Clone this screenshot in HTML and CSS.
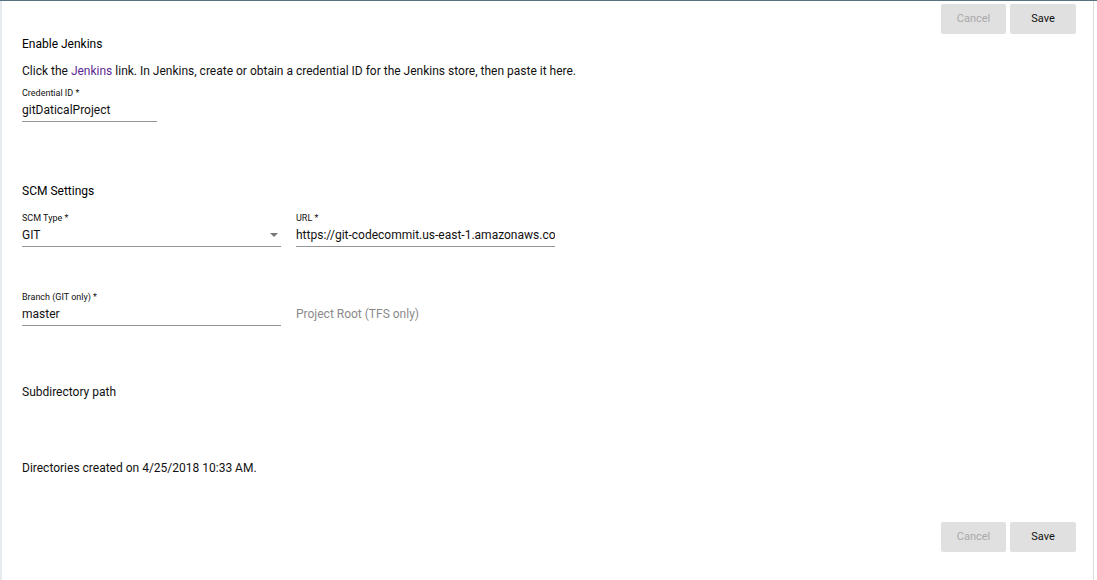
FILE: index.html
```html
<!DOCTYPE html>
<html lang="en">
<head>
  <meta charset="UTF-8">
  <title>Enable Jenkins</title>
  <link rel="stylesheet" href="styles.css">
</head>
<body>
  <div class="page">
    <div class="actions actions-top">
      <button class="btn" disabled>Cancel</button>
      <button class="btn">Save</button>
    </div>

    <h3 class="section-title first">Enable Jenkins</h3>
    <p class="hint">Click the <a href="#">Jenkins</a> link. In Jenkins, create or obtain a credential ID for the Jenkins store, then paste it here.</p>
    <div class="field small">
      <label>Credential ID *</label>
      <div class="value">gitDaticalProject</div>
    </div>

    <h3 class="section-title scm">SCM Settings</h3>
    <div class="row">
      <div class="field wide">
        <label>SCM Type *</label>
        <div class="value select">GIT<span class="caret"></span></div>
      </div>
      <div class="field wide">
        <label>URL *</label>
        <div class="value">https://git-codecommit.us-east-1.amazonaws.co</div>
      </div>
    </div>
    <div class="row second">
      <div class="field wide">
        <label>Branch (GIT only) *</label>
        <div class="value">master</div>
      </div>
      <div class="field wide plain">
        <label>&nbsp;</label>
        <div class="value placeholder">Project Root (TFS only)</div>
      </div>
    </div>

    <p class="text subdir">Subdirectory path</p>
    <p class="text created">Directories created on 4/25/2018 10:33 AM.</p>

    <div class="actions actions-bottom">
      <button class="btn" disabled>Cancel</button>
      <button class="btn">Save</button>
    </div>
  </div>
</body>
</html>
```

FILE: styles.css
```css
html, body {
  height: 100%;
}
body {
  margin: 0;
  font-family: Roboto, "Liberation Sans", Arial, sans-serif;
  color: #111;
  background-color: #fff;
  border-top: 1px solid #55737e;
  box-sizing: border-box;
}
.page {
  height: 579px;
  box-sizing: border-box;
  margin-right: 3px;
  padding: 0 17px 0 22px;
  border-left: 2px solid #e6eaec;
  border-right: 1px solid #dcdcdc;
}
.actions {
  display: flex;
  justify-content: flex-end;
  gap: 4px;
}
.actions-top {
  padding-top: 3px;
}
.actions-bottom {
  margin-top: 46px;
}
.btn {
  width: 66px;
  height: 30px;
  border: none;
  border-radius: 2px;
  background-color: #e0e0e0;
  font-family: inherit;
  font-size: 11px;
  color: #111;
  padding: 0 0 2px;
}
.btn:first-child {
  width: 65px;
}
.btn:disabled {
  color: #a9a9a9;
}
.section-title {
  margin: 0;
  font-size: 12px;
  font-weight: 400;
  line-height: 16px;
  color: #000;
}
.section-title.first {
  margin-top: 2px;
  margin-left: -2px;
}
.section-title.scm {
  margin-top: 61px;
  margin-left: -2px;
}
.hint {
  margin: 11px 0 0 -2px;
  font-size: 12px;
  line-height: 16px;
}
.hint a {
  color: #5b2a91;
  text-decoration: none;
}
.field {
  display: flex;
  flex-direction: column;
  margin-left: -2px;
}
.field label {
  font-size: 9px;
  line-height: 10px;
  margin-top: 4px;
}
.field.small label {
  margin-top: 9px;
}
.value {
  font-size: 12px;
  line-height: 16px;
  padding: 4px 0 3px;
  border-bottom: 1px solid #949494;
  white-space: nowrap;
  overflow: hidden;
}
.field.small {
  width: 135px;
}
.row {
  display: flex;
  gap: 15px;
  margin-top: 10px;
  margin-left: -2px;
}
.row .field {
  margin-left: 0;
}
.row.second {
  margin-top: 41px;
}
.field.wide {
  width: 259px;
}
.select {
  position: relative;
}
.caret {
  position: absolute;
  right: 3px;
  top: 10px;
  border-left: 4px solid transparent;
  border-right: 4px solid transparent;
  border-top: 4px solid #777;
}
.plain .value {
  border-bottom-color: transparent;
}
.placeholder {
  color: #8a8a8a;
}
.text {
  margin: 0 0 0 -2px;
  font-size: 12px;
  line-height: 16px;
}
.subdir {
  margin-top: 58px;
}
.created {
  margin-top: 60px;
}
```
